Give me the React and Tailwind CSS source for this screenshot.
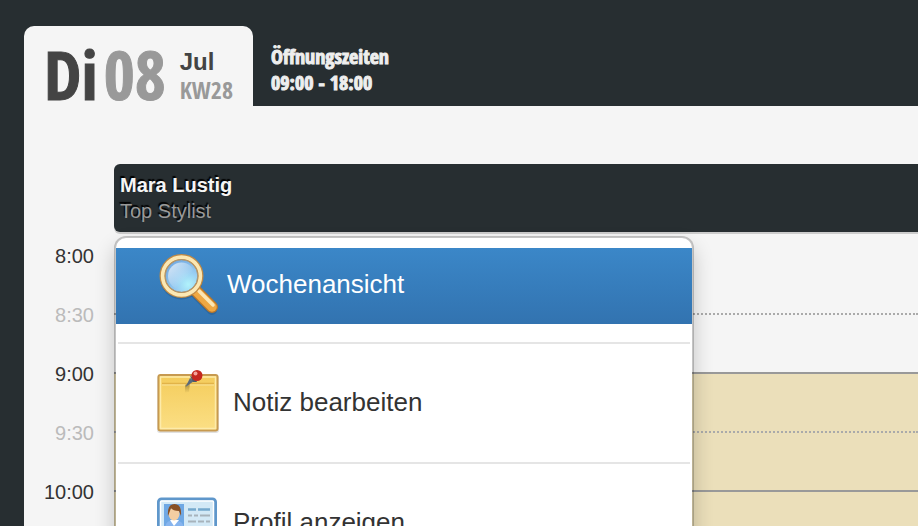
import React from 'react';

const SearchIcon = () => (
  <svg width="64" height="64" viewBox="0 0 64 64" className="shrink-0" aria-hidden="true">
    <defs>
      <radialGradient id="lens" cx="0.68" cy="0.72" r="0.75">
        <stop offset="0" stopColor="#b0f2fb" />
        <stop offset="0.45" stopColor="#98cdf2" />
        <stop offset="1" stopColor="#6fa6e0" />
      </radialGradient>
      <linearGradient id="glare" x1="0" y1="0" x2="0.8" y2="0.8">
        <stop offset="0.1" stopColor="#fff" stopOpacity="0.7" />
        <stop offset="0.8" stopColor="#fff" stopOpacity="0" />
      </linearGradient>
    </defs>
    <path d="M38 40 L56 58" stroke="#1d4d7c" strokeOpacity="0.35" strokeWidth="10" strokeLinecap="round" />
    <circle cx="25.5" cy="26" r="21.5" fill="#1d4d7c" fillOpacity="0.35" />
    <path d="M40 39 L56 55" stroke="#b9772b" strokeWidth="12" strokeLinecap="round" />
    <path d="M40 39 L56 55" stroke="#efa843" strokeWidth="9.5" strokeLinecap="round" />
    <path d="M43 39 L57 53" stroke="#fbe6b4" strokeWidth="3.5" strokeLinecap="round" />
    <circle cx="25.5" cy="24" r="19" fill="url(#lens)" stroke="#c08a45" strokeWidth="6" />
    <circle cx="25.5" cy="24" r="18.9" fill="none" stroke="#fbe8b4" strokeWidth="3.6" />
    <circle cx="25.5" cy="24" r="16.3" fill="none" stroke="#a99a80" strokeWidth="1" />
    <circle cx="25.5" cy="24" r="13.5" fill="url(#glare)" />
  </svg>
);

const NoteIcon = () => (
  <svg width="70" height="68" viewBox="0 1 70 68" className="shrink-0" aria-hidden="true">
    <defs>
      <linearGradient id="paper" x1="0" y1="0" x2="0" y2="1">
        <stop offset="0" stopColor="#f4cc5b" />
        <stop offset="1" stopColor="#fbdf85" />
      </linearGradient>
      <linearGradient id="pinShadow" x1="0" y1="0" x2="0" y2="1">
        <stop offset="0" stopColor="#7a6425" stopOpacity="0.7" />
        <stop offset="1" stopColor="#7a6425" stopOpacity="0" />
      </linearGradient>
    </defs>
    <rect x="1" y="8" width="62" height="58" rx="3" fill="#000" fillOpacity="0.12" />
    <rect x="2.5" y="8" width="59" height="55.5" rx="2" fill="url(#paper)" stroke="#c79a50" strokeWidth="2" />
    <rect x="4.5" y="10" width="55" height="51.5" fill="none" stroke="#fdebaa" strokeWidth="1.5" />
    <path d="M6 16.5 H58" stroke="#e2b348" strokeWidth="1.5" />
    <path d="M6 18 H58" stroke="#fae29a" />
    <path d="M29 18 L34 15 L33 25 L29 26Z" fill="url(#pinShadow)" />
    <path d="M29.5 20 L34 11 L38 14Z" fill="#59697c" />
    <path d="M34 9 Q39 10 41 15 L37 15 Z" fill="#4c5a6b" />
    <circle cx="41" cy="8.5" r="5.5" fill="#c5281f" />
    <circle cx="39.5" cy="6.5" r="2" fill="#f3a59b" />
  </svg>
);

const ProfileIcon = () => (
  <svg width="70" height="68" viewBox="0 1 70 68" className="shrink-0" aria-hidden="true">
    <rect x="1" y="13" width="60" height="46" rx="4" fill="#000" fillOpacity="0.15" />
    <rect x="2.5" y="12" width="57" height="44" rx="3" fill="#d3e9f6" stroke="#5f97cb" strokeWidth="3" />
    <rect x="4.5" y="14" width="53" height="40" rx="1" fill="none" stroke="#fff" strokeWidth="1.5" />
    <rect x="8" y="17" width="20" height="26" fill="#6fa8e4" />
    <path d="M9 43 Q9 35 14 34 L22 34 Q28 35 28 43Z" fill="#86b4ee" />
    <path d="M14 33 L18 39 L23 33Z" fill="#fff" />
    <ellipse cx="18" cy="27" rx="5.5" ry="6.5" fill="#f3cda2" />
    <path d="M12 29 Q11 17 18.5 17 Q26 17 25 29 L23 24 Q17 24 15 21 Q14 24 12 29Z" fill="#895023" />
    <path d="M32 22.5 H40 M42 22.5 H54" stroke="#76a9cd" strokeWidth="2.5" />
    <path d="M32 28.5 H36 M38 28.5 H42 M44 28.5 H54 M32 34.5 H40 M42 34.5 H48 M50 34.5 H54" stroke="#a7b3bb" strokeWidth="2" />
    <path d="M32 40.5 H44 M46 40.5 H54 M9 49 H54" stroke="#a7b3bb" strokeWidth="2" />
  </svg>
);

const menuItems = [
  { label: 'Wochenansicht', icon: SearchIcon, active: true },
  { label: 'Notiz bearbeiten', icon: NoteIcon },
  { label: 'Profil anzeigen', icon: ProfileIcon },
];

const slots = [
  { time: '8:00', line: 'border-transparent' },
  { time: '8:30', half: true, line: 'border-dotted border-[#aaa]' },
  { time: '9:00', line: 'border-[#999] bg-[#ebdfba]' },
  { time: '9:30', half: true, line: 'border-dotted border-[#aaa] bg-[#ebdfba]' },
  { time: '10:00', line: 'border-[#999] bg-[#ebdfba]' },
];

const DateHeader = () => (
  <header className="flex h-20 shrink-0 font-['Open_Sans_Condensed','Noto_Sans_Condensed','Liberation_Sans_Narrow','Open_Sans',sans-serif] font-bold">
    <h1 className="flex items-end gap-1.5 rounded-t-[10px] bg-[#f5f5f5] px-5 text-[#444]">
      <span className="text-[67px] leading-[64px] [-webkit-text-stroke:1px]">Di</span>
      <span className="text-[67px] leading-[64px] text-[#999] [-webkit-text-stroke:1px]">08</span>
      <span className="ml-2 flex flex-col pb-0.5 text-2xl leading-7">
        <span className="font-['Liberation_Sans',sans-serif]">Jul</span>
        <span className="text-[#999]">KW28</span>
      </span>
    </h1>
    <p className="px-[18px] pt-[18px] text-xl leading-[26px] text-[#eee] [-webkit-text-stroke:1px]">
      Öffnungszeiten
      <br />
      09:00 - 18:00
    </p>
  </header>
);

const StylistMenu = () => (
  <ul className="absolute top-full left-0 mt-1 w-[580px] rounded-xl border-2 border-black/20 bg-white bg-clip-padding py-2.5 text-[26px] text-[#333] shadow-[0_10px_20px_rgba(0,0,0,0.2)]">
    {menuItems.map((item) => {
      const Icon = item.icon;
      return (
        <li key={item.label} className="group">
          <a
            href="#"
            className={
              item.active
                ? 'flex h-[76px] items-center gap-[7px] bg-linear-to-b from-[#3b87c8] to-[#3273b0] pb-1 pl-10 text-white'
                : 'flex h-[82px] items-center gap-[7px] pb-0.5 pl-10'
            }
          >
            <Icon />
            {item.label}
          </a>
          <div className="mx-0.5 my-[18px] h-0.5 bg-[#e5e5e5] group-last:hidden" />
        </li>
      );
    })}
  </ul>
);

const App = () => {
  return (
    <div className="flex h-screen flex-col overflow-hidden bg-[#272e31] pt-[26px] pl-6 font-['Liberation_Sans',Arial,sans-serif]">
      <DateHeader />
      <main className="grow bg-[#f5f5f5] pt-[58px]">
        <div className="relative z-10 ml-[90px]">
          <div className="h-[68px] rounded-l-md bg-[#272e31] px-1.5 pt-2 text-xl leading-[26px] shadow-[0_2px_0_#ccc]">
            <h2 className="font-bold text-[#f5f5f5] [text-shadow:-1px_-2px_1px_#000]">Mara Lustig</h2>
            <p className="text-[#999] [text-shadow:-1px_-2px_1px_#000]">Top Stylist</p>
          </div>
          <StylistMenu />
        </div>
        <div className="pt-[22px]">
          {slots.map((slot) => (
            <div key={slot.time} className="flex h-[59px]">
              <time
                className={`h-7 w-[90px] -translate-y-1/2 pr-5 text-right text-xl leading-8 ${slot.half ? 'text-[#bbb]' : 'text-[#333]'}`}
              >
                {slot.time}
              </time>
              <div className={`grow border-t-2 ${slot.line}`} />
            </div>
          ))}
        </div>
      </main>
    </div>
  );
};

export default App;
